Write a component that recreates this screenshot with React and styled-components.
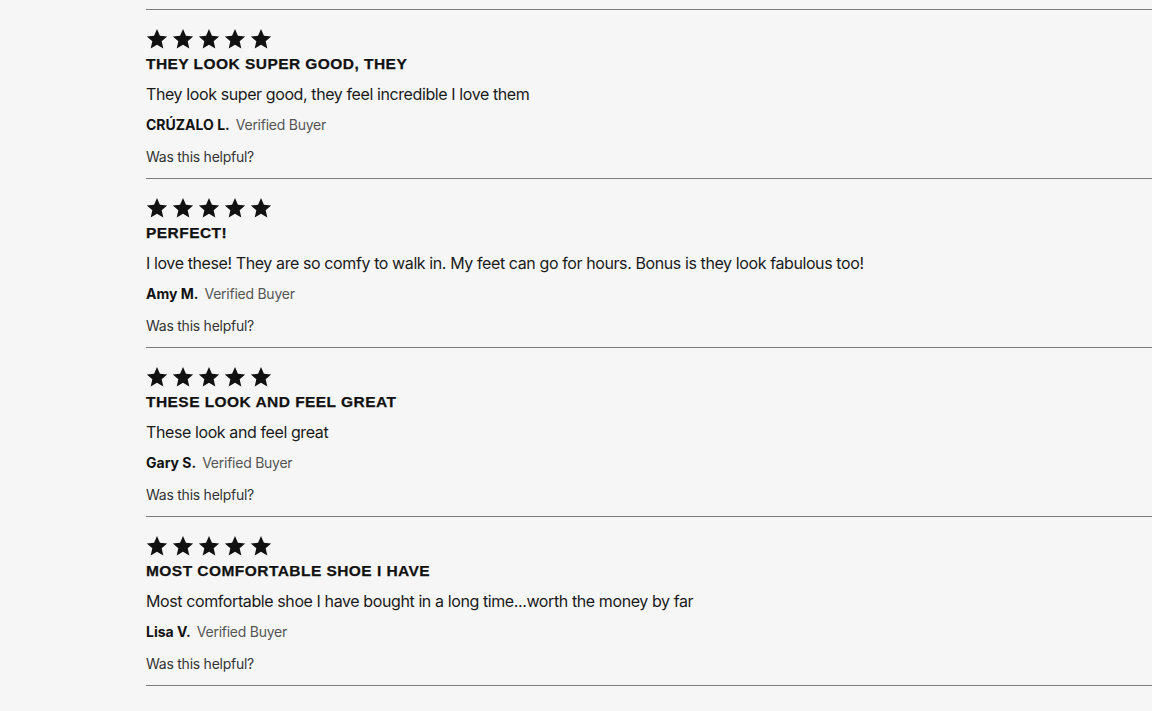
import React from "react";
import styled, { createGlobalStyle } from "styled-components";

const GlobalStyle = createGlobalStyle`
  html, body {
    margin: 0;
    padding: 0;
    background: #f6f6f6;
    color: #111;
    font-family: "Inter", "Liberation Sans", sans-serif;
  }
`;

const ReviewsWrapper = styled.div`
  padding: 9px 0 0 146px;
  overflow: hidden;
`;

const ReviewList = styled.ul`
  list-style: none;
  margin: 0;
  padding: 0;
  border-top: 1px solid #7c7c7c;
`;

const ReviewItem = styled.li`
  padding: 18px 0 11px;
  border-bottom: 1px solid #7c7c7c;
`;

const Stars = styled.div`
  display: flex;
  gap: 4px;
  height: 22px;
`;

const Title = styled.h3`
  margin: 4px 0 0;
  font-family: "Liberation Sans", "Inter", sans-serif;
  font-size: 15.5px;
  font-weight: 700;
  line-height: 20px;
  letter-spacing: 0.45px;
  -webkit-text-stroke: 0.25px #111;
  text-transform: uppercase;
  color: #111;
`;

const Body = styled.p`
  margin: 8px 0 0;
  font-size: 16px;
  line-height: 24px;
  letter-spacing: -0.4px;
  color: #1a1a1a;
`;

const Author = styled.div`
  display: flex;
  align-items: baseline;
  gap: 6px;
  margin-top: 9px;
  line-height: 20px;
`;

const AuthorName = styled.span`
  font-size: 14px;
  font-weight: 700;
  color: #111;
`;

const Verified = styled.span`
  font-size: 14px;
  letter-spacing: -0.25px;
  color: #555;
`;

const Helpful = styled.div`
  margin-top: 12px;
  font-size: 14px;
  line-height: 20px;
  letter-spacing: -0.25px;
  color: #333;
`;

const Star = () => (
  <svg width="22" height="22" viewBox="0 0 24 24">
    <path
      fill="#111"
      d="M12 1.2l3.2 7.3 7.9.7-6 5.3 1.8 7.8L12 18.2l-6.9 4.1 1.8-7.8-6-5.3 7.9-.7z"
    />
  </svg>
);

const reviews = [
  {
    title: "They look super good, they",
    body: "They look super good, they feel incredible I love them",
    name: "CRÚZALO L.",
  },
  {
    title: "Perfect!",
    body:
      "I love these! They are so comfy to walk in. My feet can go for hours. Bonus is they look fabulous too!",
    name: "Amy M.",
  },
  {
    title: "These look and feel great",
    body: "These look and feel great",
    name: "Gary S.",
  },
  {
    title: "Most comfortable shoe I have",
    body: "Most comfortable shoe I have bought in a long time...worth the money by far",
    name: "Lisa V.",
  },
];

const App = () => {
  return (
    <>
      <GlobalStyle />
      <ReviewsWrapper>
        <ReviewList>
          {reviews.map((review) => (
            <ReviewItem key={review.name}>
              <Stars>
                {[0, 1, 2, 3, 4].map((i) => (
                  <Star key={i} />
                ))}
              </Stars>
              <Title>{review.title}</Title>
              <Body>{review.body}</Body>
              <Author>
                <AuthorName>{review.name}</AuthorName>
                <Verified>Verified Buyer</Verified>
              </Author>
              <Helpful>Was this helpful?</Helpful>
            </ReviewItem>
          ))}
        </ReviewList>
      </ReviewsWrapper>
    </>
  );
};

export default App;
